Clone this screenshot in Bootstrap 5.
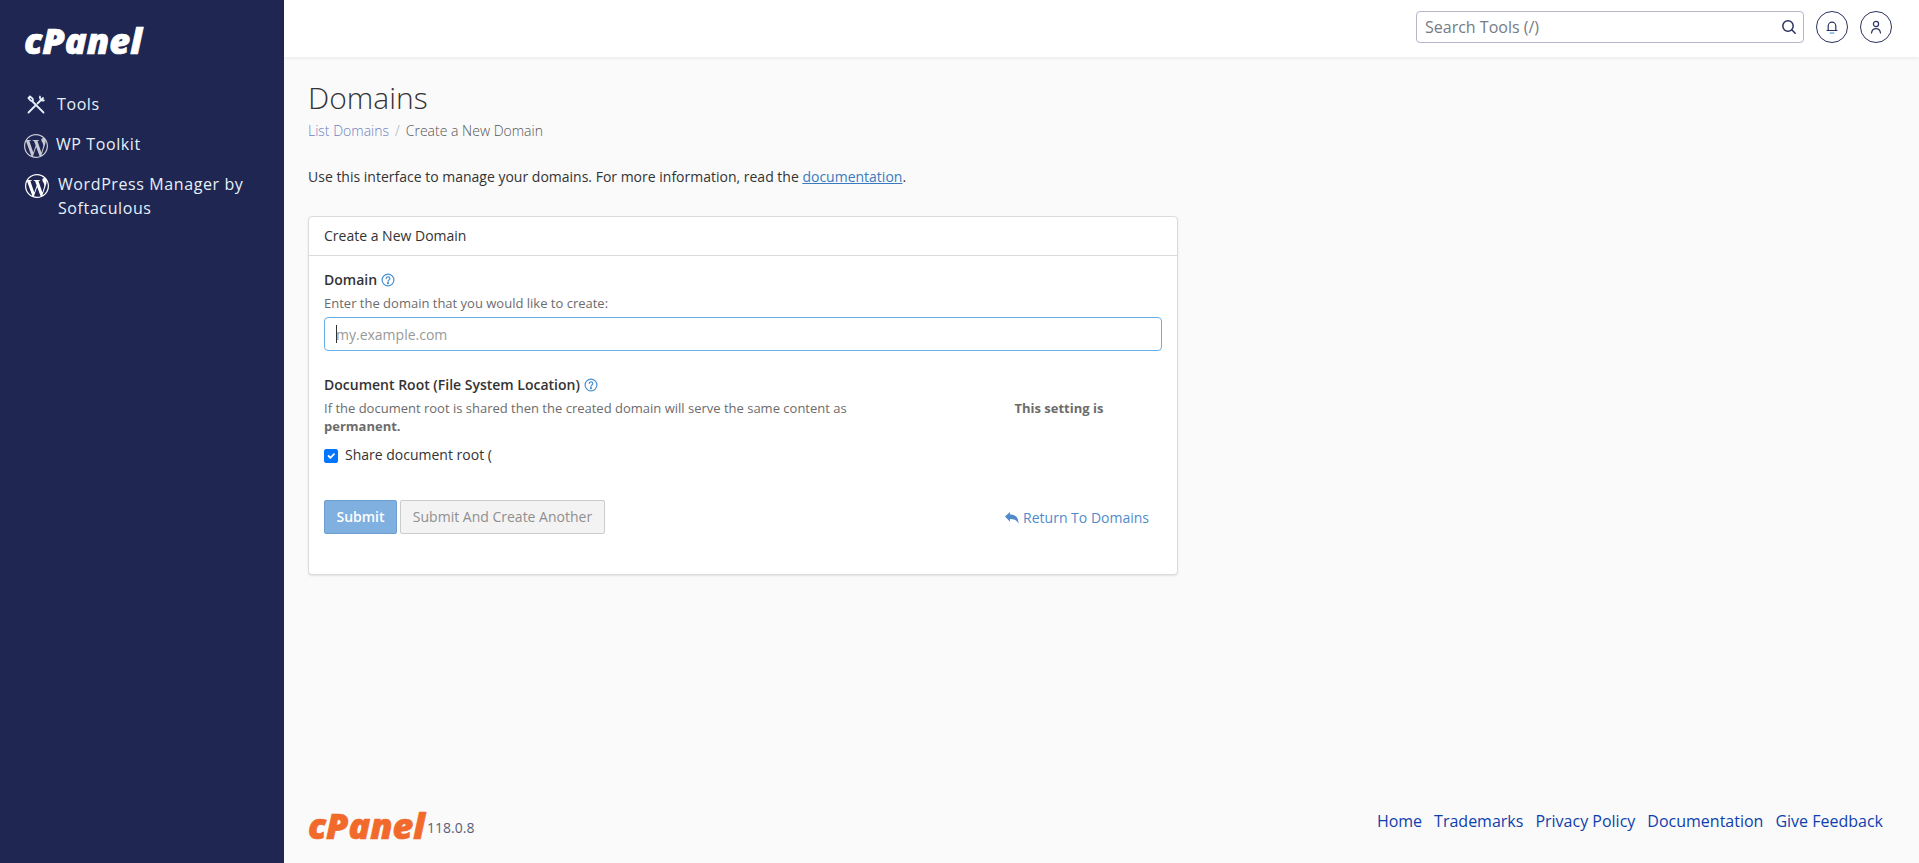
<!DOCTYPE html>
<html lang="en">

<head>
    <meta charset="UTF-8">
    <meta name="viewport" content="width=device-width, initial-scale=1.0">
    <title>cPanel - Domains</title>
    <link href="https://cdn.jsdelivr.net/npm/bootstrap@5.3.0/dist/css/bootstrap.min.css" rel="stylesheet">
    <style>
        body { font-family: "Open Sans", "Liberation Sans", sans-serif; font-size: 14px; color: #333; background: #fafafa; }
        .app-shell { height: 863px; overflow: hidden; }
        .side-bar { width: 284px; background: #1f2651; color: #e6f0fa; padding: 29px 24px 0; }
        .brand-mark { display: block; margin-bottom: 37px; overflow: visible; }
        .brand-text { font-family: "Open Sans", sans-serif; font-weight: 800; font-style: italic; stroke-width: .7px; }
        .side-link { color: #e6f0fa; font-size: 16px; letter-spacing: .6px; line-height: 24px; text-decoration: none; margin-bottom: 16px; }
        .side-link svg { flex: none; }
        .tool-glyph { margin: 0 12px 0 3px; }
        .wp-glyph { margin: 2px 8px -2px 0; opacity: .75; }
        .wp-glyph-two { margin: 2px 9px -2px 1px; }
        .top-bar { height: 57px; background: #fff; box-shadow: 0 1px 4px rgba(0,0,0,.08); padding: 0 27px 3px 0; }
        .search-box { width: 388px; height: 32px; }
        .search-box input { height: 32px; font-size: 16px; padding: 0 30px 0 8px; border: 1px solid #b5b5cc; border-radius: 4px; color: #6d6d7d; }
        .search-box input::placeholder { color: #757b85; }
        .search-box svg { position: absolute; right: 7px; top: 8px; }
        .round-btn { width: 32px; height: 32px; border: 1px solid #2b3160; border-radius: 50%; background: #fff; padding: 0; margin-left: 12px; }
        .page-body { padding: 21px 0 0 24px; }
        .page-title { font-size: 30px; font-weight: 300; line-height: 40px; margin: 0 0 3px; color: #333; }
        .crumb-row { font-size: 14px; font-weight: 300; margin-bottom: 27px; --bs-breadcrumb-divider-color: #aaa; --bs-breadcrumb-item-padding-x: 6px; line-height: 19px; }
        .crumb-row a { color: #6f7fc0; text-decoration: none; }
        .crumb-row .active { color: #555; }
        .intro-text { margin: 0 0 29px; line-height: 20px; color: #333; }
        .intro-text a { color: #3a7ac0; }
        .domain-card { width: 870px; height: 359px; border-color: #dcdcdc; border-radius: 4px; box-shadow: 0 1px 2px rgba(0,0,0,.1); }
        .domain-card .card-header { background: #fff; border-color: #dcdcdc; height: 39px; padding: 9px 15px; line-height: 20px; font-size: 14px; }
        .domain-card .card-body { padding: 13px 15px 15px; }
        .field-label { font-weight: 600; line-height: 20px; margin: 0; color: #333; }
        .field-label-next { margin-top: 24px; }
        .help-glyph { vertical-align: -2px; }
        .field-help { font-size: 13px; color: #6c6c6c; line-height: 18px; margin: 4px 0 5px; }
        .field-help strong { font-weight: 700; }
        .help-gap { display: inline-block; width: 161px; }
        .domain-input { height: 34px; border: 1px solid #66afe9; border-radius: 4px; font-size: 14px; padding: 0 11px; box-shadow: none; }
        .domain-input::placeholder { color: #999; }
        .input-wrap::before { content: ""; position: absolute; left: 12px; top: 8px; width: 1px; height: 18px; background: #333; }
        .check-row { margin-top: 10px; padding-left: 21px; min-height: 20px; margin-bottom: 0; line-height: 20px; }
        .check-row .form-check-input { width: 14px; height: 14px; margin-left: -21px; margin-top: 4px; border-radius: 2px; }
        .check-row .form-check-input:checked { background-color: #0075ff; border-color: #0075ff; }
        .btn-row { margin-top: 35px; }
        .btn-submit, .btn-another { height: 34px; font-size: 14px; line-height: 20px; padding: 6px 0; border-radius: 2px; white-space: nowrap; }
        .btn-submit { width: 73px; font-weight: 600; color: #fff; background: #7fb0e0; border: 1px solid #6d9fd1; opacity: 1; }
        .btn-another { width: 205px; margin-left: 3px; color: #8f8f8f; background: #f3f3f3; border: 1px solid #ccc; }
        .back-link { color: #4f8bcb; text-decoration: none; margin-right: 13px; }
        .back-link svg { vertical-align: -1px; }
        .page-foot { padding: 0 36px 0 24px; height: 57px; }
        .foot-logo { margin-top: 8px; overflow: visible; }
        .foot-ver { font-size: 14px; color: #5a6078; margin-top: 11px; }
        .foot-links { padding-top: 3px; gap: 12px; }
        .foot-links a { color: #0f3fae; font-size: 16px; text-decoration: none; }
    </style>
</head>

<body>
    <div class="app-shell d-flex">
        <!-- Sidebar -->
        <aside class="side-bar flex-shrink-0">
            <svg class="brand-mark" width="120" height="26" viewBox="0 0 120 26">
                <text class="brand-text" x="0" y="25" font-size="35" fill="#fff" stroke="#fff" textLength="118" lengthAdjust="spacingAndGlyphs">cPanel</text>
            </svg>
            <a class="side-link d-flex" href="#">
                <svg class="tool-glyph" width="18" height="24" viewBox="0 0 18 24" fill="none" stroke="#e6f0fa" stroke-width="1.8" stroke-linecap="round">
                    <path d="M1.500 20.500 8 14M10.500 11.500 16 6M13 4.500a3 3 0 0 0 3.800 3.800"/>
                    <path d="M16.500 20.500 5 9M3 4.500 1.500 6 3.500 8.500 5 9l1-1-.5-1.500z"/>
                </svg>
                Tools
            </a>
            <a class="side-link d-flex" href="#">
                <svg class="wp-glyph" width="24" height="24" viewBox="0 0 24 24" fill="#fff"><path d="M21.469 6.825c.84 1.537 1.318 3.3 1.318 5.175 0 3.979-2.156 7.456-5.363 9.325l3.295-9.527c.615-1.54.82-2.771.82-3.864 0-.405-.026-.78-.07-1.11m-7.981.105c.647-.03 1.232-.105 1.232-.105.582-.075.514-.93-.067-.899 0 0-1.755.135-2.88.135-1.064 0-2.85-.15-2.85-.15-.585-.03-.661.855-.075.885 0 0 .54.061 1.125.09l1.68 4.605-2.37 7.08L5.354 6.9c.649-.03 1.234-.1 1.234-.1.585-.075.516-.93-.065-.896 0 0-1.746.138-2.874.138-.2 0-.438-.008-.69-.015C4.911 3.15 8.235 1.215 12 1.215c2.809 0 5.365 1.072 7.286 2.833-.046-.003-.091-.009-.141-.009-1.06 0-1.812.923-1.812 1.914 0 .89.513 1.643 1.06 2.531.411.72.89 1.643.89 2.977 0 .915-.354 1.994-.821 3.479l-1.075 3.585-3.9-11.61.001.014zM12 22.784c-1.059 0-2.081-.153-3.048-.437l3.237-9.406 3.315 9.087c.024.053.05.101.078.149-1.12.393-2.325.609-3.582.609M1.211 12c0-1.564.336-3.05.935-4.39L7.29 21.709C3.694 19.96 1.212 16.271 1.211 12M12 0C5.385 0 0 5.385 0 12s5.385 12 12 12 12-5.385 12-12S18.615 0 12 0"/></svg>
                WP Toolkit
            </a>
            <a class="side-link d-flex" href="#">
                <svg class="wp-glyph-two" width="24" height="24" viewBox="0 0 24 24" fill="#fff"><path d="M21.469 6.825c.84 1.537 1.318 3.3 1.318 5.175 0 3.979-2.156 7.456-5.363 9.325l3.295-9.527c.615-1.54.82-2.771.82-3.864 0-.405-.026-.78-.07-1.11m-7.981.105c.647-.03 1.232-.105 1.232-.105.582-.075.514-.93-.067-.899 0 0-1.755.135-2.88.135-1.064 0-2.85-.15-2.85-.15-.585-.03-.661.855-.075.885 0 0 .54.061 1.125.09l1.68 4.605-2.37 7.08L5.354 6.9c.649-.03 1.234-.1 1.234-.1.585-.075.516-.93-.065-.896 0 0-1.746.138-2.874.138-.2 0-.438-.008-.69-.015C4.911 3.15 8.235 1.215 12 1.215c2.809 0 5.365 1.072 7.286 2.833-.046-.003-.091-.009-.141-.009-1.06 0-1.812.923-1.812 1.914 0 .89.513 1.643 1.06 2.531.411.72.89 1.643.89 2.977 0 .915-.354 1.994-.821 3.479l-1.075 3.585-3.9-11.61.001.014zM12 22.784c-1.059 0-2.081-.153-3.048-.437l3.237-9.406 3.315 9.087c.024.053.05.101.078.149-1.12.393-2.325.609-3.582.609M1.211 12c0-1.564.336-3.05.935-4.39L7.29 21.709C3.694 19.96 1.212 16.271 1.211 12M12 0C5.385 0 0 5.385 0 12s5.385 12 12 12 12-5.385 12-12S18.615 0 12 0"/></svg>
                <span>WordPress Manager by Softaculous</span>
            </a>
        </aside>

        <div class="flex-grow-1 d-flex flex-column">
            <!-- Top bar -->
            <header class="top-bar d-flex align-items-center justify-content-end flex-shrink-0">
                <div class="search-box position-relative">
                    <input class="w-100 d-block" type="text" placeholder="Search Tools (/)">
                    <svg width="16" height="16" viewBox="0 0 16 16" fill="none" stroke="#2b3160" stroke-width="1.5" stroke-linecap="round"><circle cx="7" cy="7" r="5.2"/><path d="M11 11l3.2 3.2"/></svg>
                </div>
                <button class="round-btn d-flex align-items-center justify-content-center" type="button" aria-label="Notifications">
                    <svg width="14" height="14" viewBox="0 0 14 14" fill="none" stroke="#2b3160" stroke-width="1.2" stroke-linecap="round" stroke-linejoin="round"><path d="M2 10.500h10M3.200 10.500V6a3.800 3.800 0 0 1 7.600 0v4.500"/><path d="M5.200 13h3.600" stroke="#3a8fd0"/></svg>
                </button>
                <button class="round-btn d-flex align-items-center justify-content-center" type="button" aria-label="Account">
                    <svg width="14" height="14" viewBox="0 0 14 14" fill="none" stroke="#2b3160" stroke-width="1.2" stroke-linecap="round"><circle cx="7" cy="4" r="2.600"/><path d="M2.500 13c.4-3 2.200-4.400 4.500-4.400s4.100 1.400 4.500 4.400"/></svg>
                </button>
            </header>

            <!-- Content -->
            <main class="page-body flex-grow-1">
                <h1 class="page-title">Domains</h1>
                <nav aria-label="breadcrumb">
                    <ol class="breadcrumb crumb-row">
                        <li class="breadcrumb-item"><a href="#">List Domains</a></li>
                        <li class="breadcrumb-item active" aria-current="page">Create a New Domain</li>
                    </ol>
                </nav>
                <p class="intro-text">Use this interface to manage your domains. For more information, read the <a href="#">documentation</a>.</p>

                <div class="card domain-card">
                    <div class="card-header">Create a New Domain</div>
                    <div class="card-body">
                        <form>
                            <label class="field-label" for="domainInput">Domain
                                <svg class="help-glyph" width="14" height="14" viewBox="0 0 14 14" fill="none" stroke="#4a90d0" stroke-width="1.2"><circle cx="7" cy="7" r="5.9"/><path d="M5.200 5.500C5.300 4.400 6 3.900 7 3.900s1.900.6 1.900 1.600c0 1.400-1.900 1.400-1.900 2.800" stroke-linecap="round"/><circle cx="7" cy="10.200" r=".5" fill="#4a90d0"/></svg>
                            </label>
                            <div class="field-help">Enter the domain that you would like to create:</div>
                            <div class="input-wrap position-relative">
                                <input id="domainInput" class="form-control domain-input" type="text" placeholder="my.example.com">
                            </div>

                            <label class="field-label field-label-next" for="shareRoot">Document Root (File System Location)
                                <svg class="help-glyph" width="14" height="14" viewBox="0 0 14 14" fill="none" stroke="#4a90d0" stroke-width="1.2"><circle cx="7" cy="7" r="5.9"/><path d="M5.200 5.500C5.300 4.400 6 3.900 7 3.900s1.900.6 1.900 1.600c0 1.400-1.900 1.400-1.900 2.800" stroke-linecap="round"/><circle cx="7" cy="10.200" r=".5" fill="#4a90d0"/></svg>
                            </label>
                            <div class="field-help">If the document root is shared then the created domain will serve the same content as <span class="help-gap"></span> <strong>This setting is permanent.</strong></div>
                            <div class="form-check check-row">
                                <input class="form-check-input" type="checkbox" id="shareRoot" checked>
                                <label class="form-check-label" for="shareRoot">Share document root (</label>
                            </div>

                            <div class="btn-row d-flex align-items-center">
                                <button class="btn btn-submit" type="button">Submit</button>
                                <button class="btn btn-another" type="button">Submit And Create Another</button>
                                <a class="back-link ms-auto" href="#">
                                    <svg width="14" height="12" viewBox="0 0 14 12" fill="#4f8bcb"><path d="M0 4.500 5 0v2.600c5 0 8.500 2.400 8.500 9.100C12 8.300 9.500 7 5 7v2.800z"/></svg>
                                    Return To Domains</a>
                            </div>
                        </form>
                    </div>
                </div>
            </main>

            <!-- Footer -->
            <footer class="page-foot d-flex justify-content-between flex-shrink-0">
                <div class="d-flex align-items-start">
                    <svg class="foot-logo" width="119" height="28" viewBox="0 0 119 28">
                        <text class="brand-text" x="0" y="25" font-size="35" fill="#f26a2b" stroke="#f26a2b" textLength="117" lengthAdjust="spacingAndGlyphs">cPanel</text>
                    </svg>
                    <span class="foot-ver">118.0.8</span>
                </div>
                <div class="foot-links d-flex">
                    <a href="#">Home</a>
                    <a href="#">Trademarks</a>
                    <a href="#">Privacy Policy</a>
                    <a href="#">Documentation</a>
                    <a href="#">Give Feedback</a>
                </div>
            </footer>
        </div>
    </div>

    <script src="https://cdn.jsdelivr.net/npm/bootstrap@5.3.0/dist/js/bootstrap.bundle.min.js"></script>
</body>

</html>
